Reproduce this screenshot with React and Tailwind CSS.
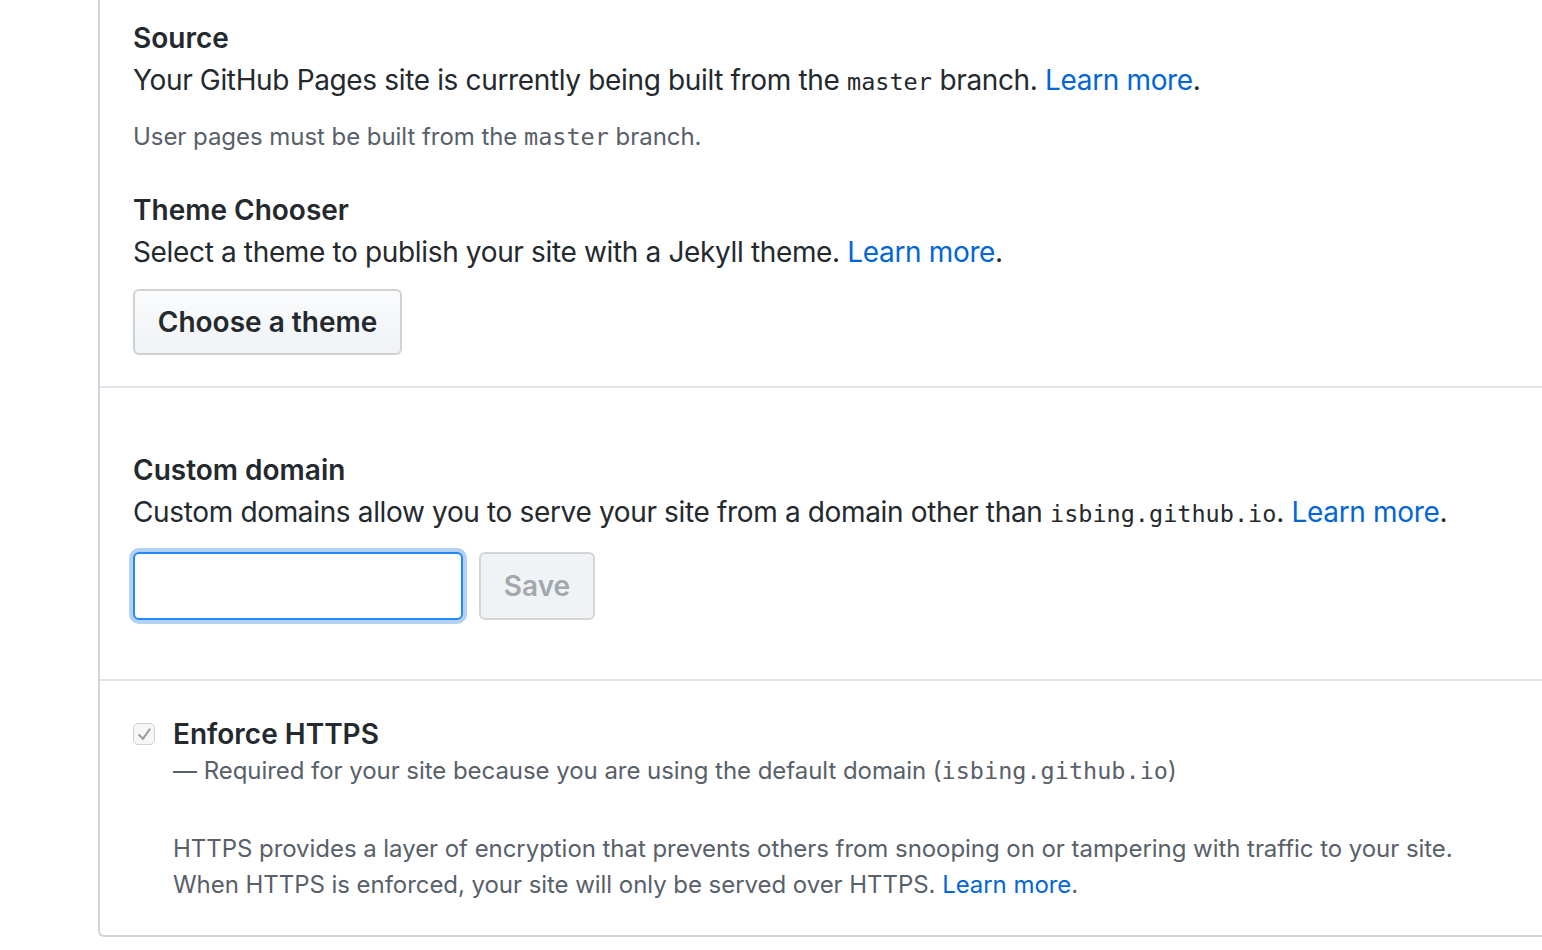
import React from 'react';

const sans = { fontFamily: 'Inter, "Liberation Sans", sans-serif' };

const Mono = ({ children }) => (
  <code className="font-['DejaVu_Sans_Mono',monospace] text-[23.5px] leading-none tracking-normal">{children}</code>
);

const Link = ({ children }) => (
  <a href="#" className="text-[#0366d6]">{children}</a>
);

// Disabled checked checkbox (grey)
const CheckBox = () => (
  <span className="mt-[7px] flex h-[22px] w-[22px] shrink-0 items-center justify-center rounded-[5px] border border-[#d2d2d2] bg-[#f7f7f7]">
    <svg viewBox="0 0 16 16" className="h-[19px] w-[19px]" fill="none" stroke="#9c9c9c" strokeWidth="1.7" strokeLinecap="round" strokeLinejoin="round">
      <path d="M3.6 8.4l3 3.3 5.8-8" />
    </svg>
  </span>
);

function App() {
  return (
    <div className="min-h-screen overflow-hidden bg-white pl-[98px] text-[#24292e]" style={sans}>
      <div className="rounded-bl-[6px] border-b-2 border-l-2 border-[#d1d5da]">
        {/* Source + theme chooser */}
        <div className="px-[33px] pt-[20px] pb-[31px]">
          <h3 className="text-[28px] font-semibold leading-[36px]">Source</h3>
          <p className="mt-[4px] text-[28px] leading-[40px] tracking-[-0.35px]">
            Your GitHub Pages site is currently being built from the <Mono>master</Mono> branch. <Link>Learn more</Link>.
          </p>
          <p className="mt-[19px] text-[24px] leading-[36px] tracking-[-0.05px] text-[#586069]">
            User pages must be built from the <Mono>master</Mono> branch.
          </p>

          <h3 className="mt-[37px] text-[28px] font-semibold leading-[36px]">Theme Chooser</h3>
          <p className="mt-[4px] text-[28px] leading-[40px] tracking-[-0.35px]">
            Select a theme to publish your site with a Jekyll theme. <Link>Learn more</Link>.
          </p>
          <button className="mt-[17px] block h-[66px] w-[269px] rounded-[6px] border-2 border-[#cfd1d3] bg-gradient-to-b from-[#fafbfc] to-[#eff3f6] text-[28px] font-semibold text-[#24292e]">
            Choose a theme
          </button>
        </div>

        {/* Custom domain */}
        <div className="border-t-2 border-[#e1e4e8] px-[33px] pt-[64px] pb-[59px]">
          <h3 className="text-[28px] font-semibold leading-[36px]">Custom domain</h3>
          <p className="mt-[4px] text-[28px] leading-[40px] tracking-[-0.35px]">
            Custom domains allow you to serve your site from a domain other than <Mono>isbing.github.io</Mono>. <Link>Learn more</Link>.
          </p>
          <div className="mt-[20px] flex items-start gap-[16px]">
            <input
              type="text"
              className="h-[68px] w-[330px] rounded-[6px] border-2 border-[#2188ff] bg-white px-3 text-[28px] shadow-[0_0_0_4px_rgba(3,102,214,0.3)] outline-none"
            />
            <button
              disabled
              className="h-[68px] w-[116px] rounded-[6px] border-2 border-[#d3d5d7] bg-[#eff3f6] text-[28px] font-semibold text-[#a3a8ad]"
            >
              Save
            </button>
          </div>
        </div>

        {/* Enforce HTTPS */}
        <div className="border-t-2 border-[#e1e4e8] px-[33px] pt-[35px] pb-[32px]">
          <div className="flex gap-[18px]">
            <CheckBox />
            <div>
              <label className="block text-[28px] font-semibold leading-[36px]">Enforce HTTPS</label>
              <p className="mt-[1px] text-[24px] leading-[36px] tracking-[-0.05px] text-[#586069]">
                — Required for your site because you are using the default domain (<Mono>isbing.github.io</Mono>)
              </p>
              <p className="mt-[42px] text-[24px] leading-[36px] tracking-[-0.05px] text-[#586069]">
                HTTPS provides a layer of encryption that prevents others from snooping on or tampering with traffic to your site.
                <br />
                When HTTPS is enforced, your site will only be served over HTTPS. <Link>Learn more</Link>.
              </p>
            </div>
          </div>
        </div>
      </div>
    </div>
  );
}

export default App;
